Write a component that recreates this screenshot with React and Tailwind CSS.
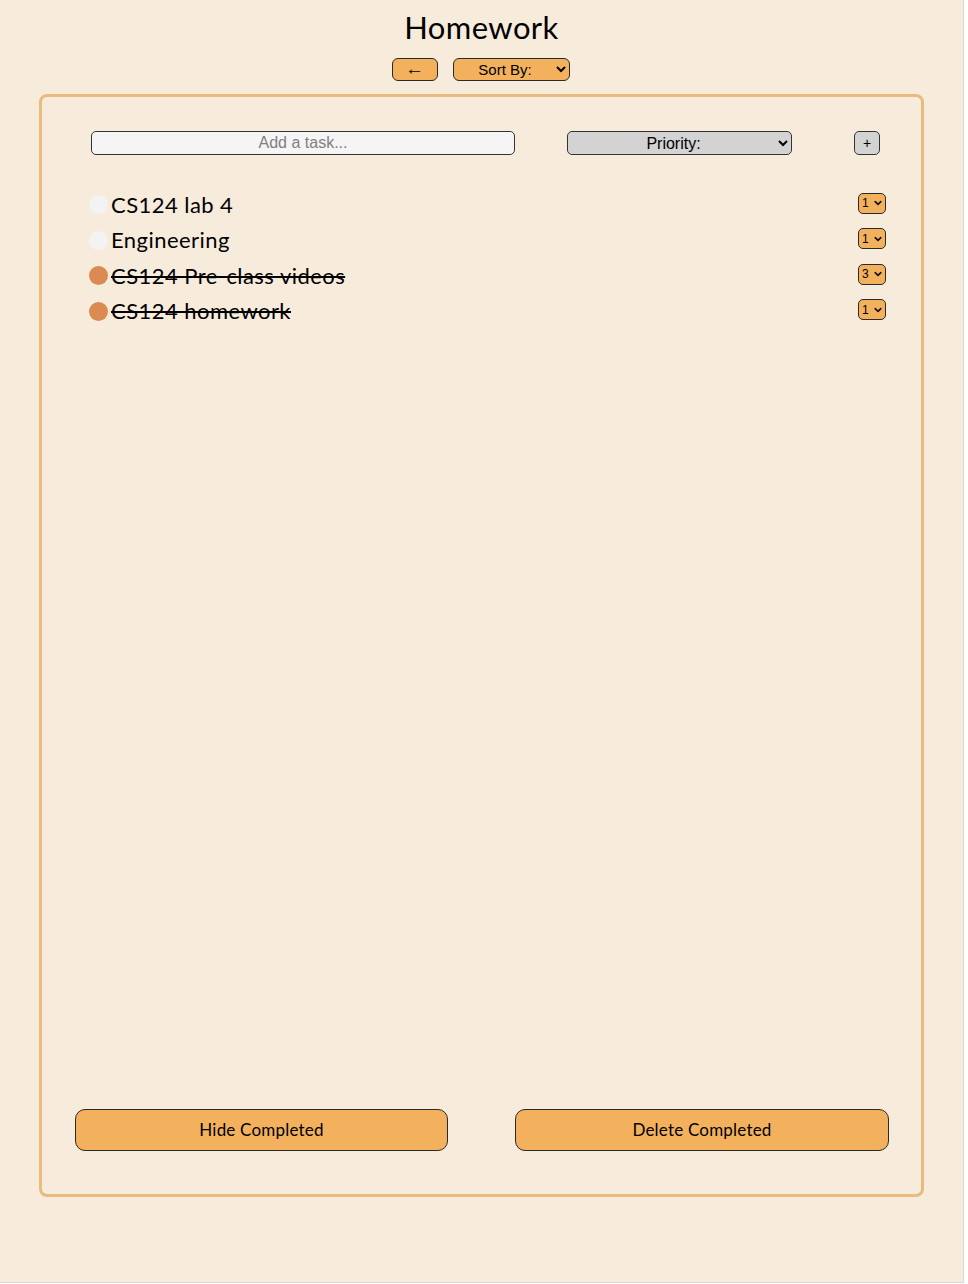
import React, { useState } from 'react';

const tasks = [
  { id: 1, name: 'CS124 lab 4', done: false, priority: '1' },
  { id: 2, name: 'Engineering', done: false, priority: '1' },
  { id: 3, name: 'CS124 Pre-class videos', done: true, priority: '3' },
  { id: 4, name: 'CS124 homework', done: true, priority: '1' },
];

const Chevron = () => (
  <svg viewBox="0 0 10 10" className="w-[8px] h-[8px] pointer-events-none absolute right-[4px] top-1/2 -translate-y-1/2">
    <path d="M1.5 3.2 L5 6.7 L8.5 3.2" fill="none" stroke="#111" strokeWidth="2" strokeLinecap="round" strokeLinejoin="round" />
  </svg>
);

const App = () => {
  const [items, setItems] = useState(tasks);

  const toggle = (id) => {
    setItems(items.map((t) => (t.id === id ? { ...t, done: !t.done } : t)));
  };

  const setPriority = (id, p) => {
    setItems(items.map((t) => (t.id === id ? { ...t, priority: p } : t)));
  };

  const orangeBtn = 'bg-[#f3b15d] border border-[#2a2a2a] text-black';
  const arial = "font-['Liberation_Sans',Arial,sans-serif]";

  return (
    <div className="w-[968px] h-[1284px] bg-white">
      <div className="w-[964px] h-[1283px] border-r border-b border-[#d8d8d8] bg-[#f7ecdc] flex flex-col items-center font-['Lato',sans-serif] text-black">
        <h1 className="mt-[8px] text-[31px] leading-[38px] tracking-[0.4px]">Homework</h1>
        <div className="mt-[12px] flex gap-[15px] -translate-x-[1px]">
          <button type="button" className={`${orangeBtn} ${arial} w-[46px] h-[23px] rounded-[6px] text-[19px] leading-none pb-[2px]`}>
            ←
          </button>
          <select className={`${orangeBtn} ${arial} w-[117px] h-[23px] rounded-[6px] text-[15px] px-1 [text-align-last:center]`}>
            <option>Sort By:</option>
          </select>
        </div>

        <div className="mt-[13px] self-start ml-[39px] w-[885px] h-[1103px] border-[3px] border-[#e8bb7e] rounded-[8px] flex flex-col">
          <div className="mt-[34px] flex items-center">
            <input
              type="text"
              placeholder="Add a task..."
              className={`${arial} ml-[49px] w-[424px] h-[24px] bg-[#f5f5f5] border border-[#333] rounded-[5px] text-center text-[16px] placeholder:text-[#808080]`}
            />
            <select className={`${arial} ml-[52px] w-[225px] h-[24px] bg-[#d3d3d3] border border-[#333] rounded-[5px] text-[16px] px-1 [text-align-last:center]`}>
              <option>Priority:</option>
            </select>
            <button type="button" className={`${arial} ml-[62px] w-[26px] h-[24px] bg-[#d3d3d3] border border-[#333] rounded-[5px] text-[14px] leading-none`}>
              +
            </button>
          </div>

          <ul className="mt-[32px] flex-1">
            {items.map((t) => (
              <li key={t.id} className="h-[35.5px] flex items-center">
                <button
                  type="button"
                  onClick={() => toggle(t.id)}
                  className={`ml-[47px] w-[19px] h-[19px] rounded-full ${t.done ? 'bg-[#db8b52]' : 'bg-[#f3f3f3]'}`}
                />
                <span className={`ml-[3px] text-[22px] leading-none tracking-[0.45px] ${t.done ? 'line-through' : ''}`}>{t.name}</span>
                <div className="relative ml-auto mr-[35px] -mt-[3px]">
                  <select
                    value={t.priority}
                    onChange={(e) => setPriority(t.id, e.target.value)}
                    className={`${orangeBtn} ${arial} appearance-none block w-[28px] h-[21px] rounded-[5px] text-[12px] pl-[3px]`}
                  >
                    <option>1</option>
                    <option>2</option>
                    <option>3</option>
                  </select>
                  <Chevron />
                </div>
              </li>
            ))}
          </ul>

          <div className="mb-[43px] flex justify-between pl-[33px] pr-[32px]">
            <button type="button" className={`${orangeBtn} w-[373px] h-[42px] rounded-[10px] text-[17px] tracking-[0.2px]`}>
              Hide Completed
            </button>
            <button type="button" className={`${orangeBtn} w-[374px] h-[42px] rounded-[10px] text-[17px] tracking-[0.2px]`}>
              Delete Completed
            </button>
          </div>
        </div>
      </div>
    </div>
  );
};

export default App;
